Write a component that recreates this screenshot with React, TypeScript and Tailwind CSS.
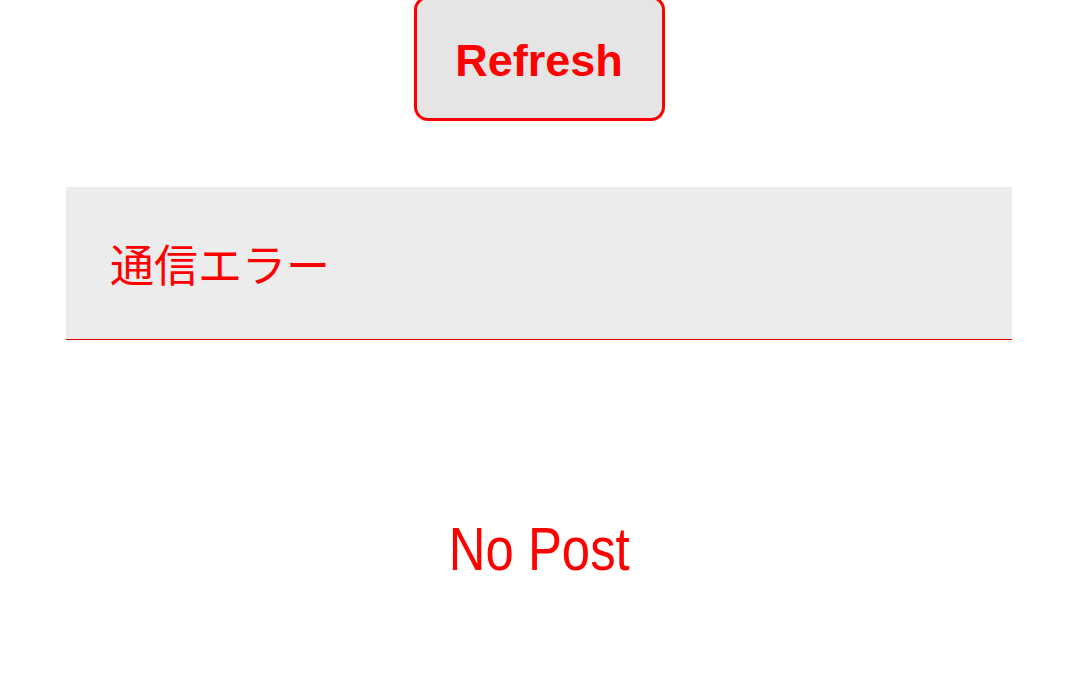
import React from "react";

export default function App() {
  return (
    <div className="w-[1078px] h-[696px] bg-white overflow-hidden flex flex-col items-center">
      <div className="mt-[-4px] w-[251px] h-[125px] rounded-[14px] border-[3px] border-[#ff0000] bg-[#e5e5e5] flex items-center justify-center pt-[4px]">
        <span
          className="text-[45px] font-bold leading-none text-[#ff0000]"
          style={{ fontFamily: '"Liberation Sans", Arial, sans-serif' }}
        >
          Refresh
        </span>
      </div>
      <div className="mt-[66px] w-[946px] h-[153px] bg-[#ececec] border-b border-[#e00000] flex items-center pl-[44px]">
        <span
          className="text-[44px] leading-none text-[#ff0000]"
          style={{ fontFamily: '"Noto Sans CJK JP", sans-serif' }}
        >
          通信エラー
        </span>
      </div>
      <div className="mt-[178px]">
        <span
          className="inline-block scale-x-[0.82] text-[62px] leading-none text-[#ff0000]"
          style={{ fontFamily: '"Liberation Sans", Arial, sans-serif' }}
        >
          No Post
        </span>
      </div>
    </div>
  );
}
